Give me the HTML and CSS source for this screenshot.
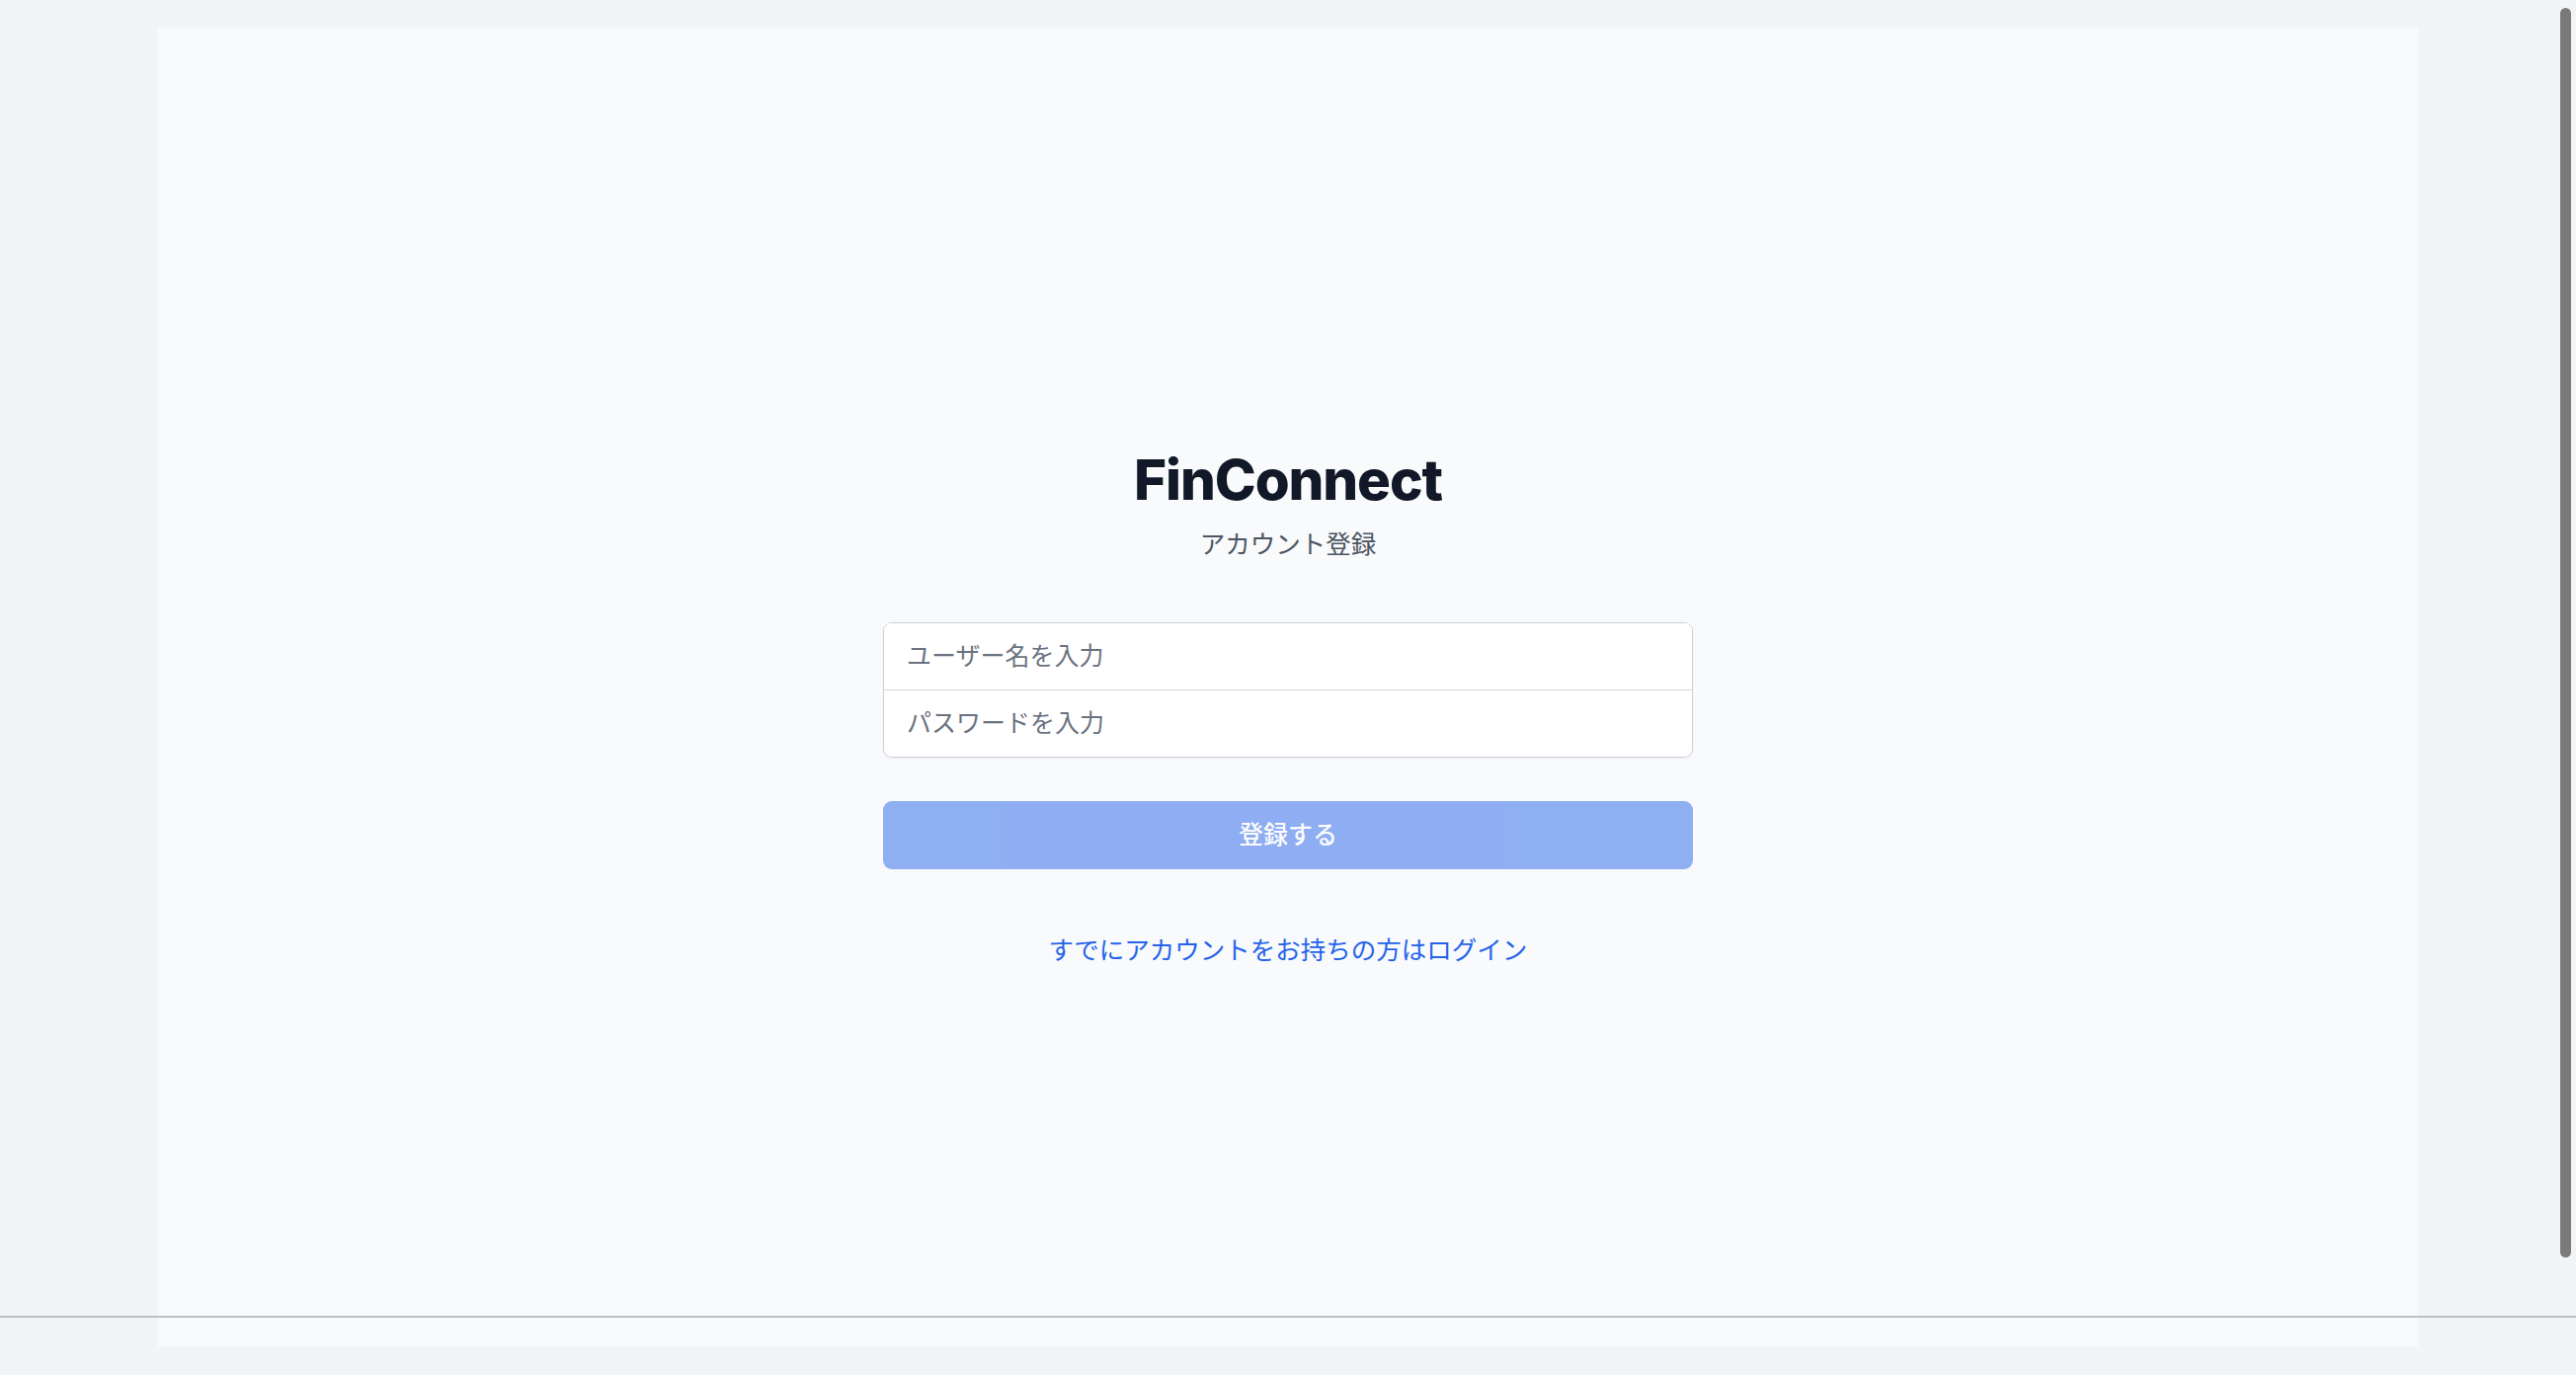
FILE: index.html
```html
<!DOCTYPE html>
<html lang="ja">
<head>
<meta charset="utf-8">
<title>FinConnect - アカウント登録</title>
<link rel="stylesheet" href="styles.css">
</head>
<body>
<div class="frame">
  <main class="panel">
    <h1 class="title">FinConnect</h1>
    <p class="subtitle">アカウント登録</p>
    <form class="form">
      <div class="field-group">
        <input class="field" type="text" placeholder="ユーザー名を入力">
        <input class="field field-last" type="password" placeholder="パスワードを入力">
      </div>
      <button class="submit" type="button">登録する</button>
    </form>
    <a class="login-link" href="#">すでにアカウントをお持ちの方はログイン</a>
  </main>
</div>
<div class="bottom-rule"></div>
<div class="scrollbar"></div>
</body>
</html>
```

FILE: styles.css
```css
* { box-sizing: border-box; }

html, body {
  margin: 0;
  padding: 0;
  height: 100%;
  overflow: hidden;
}

body {
  background: #f3f4f6;
  font-family: "Noto Sans CJK JP", "Noto Sans", sans-serif;
}

.frame {
  padding: 29px 160px;
  height: 1392px;
}

.panel {
  background: #f9fafb;
  height: 1334px;
  display: flex;
  flex-direction: column;
  align-items: center;
  padding-top: 422px;
}

.title {
  margin: 0;
  font-family: "Inter", "Liberation Sans", sans-serif;
  font-weight: 800;
  font-size: 56.5px;
  line-height: 69px;
  color: #111827;
  letter-spacing: -1.1px;
}

.subtitle {
  margin: 10px 0 0;
  font-size: 25.5px;
  line-height: 38px;
  color: #4b5563;
}

.form {
  margin-top: 62px;
  width: 820px;
  display: flex;
  flex-direction: column;
  gap: 44px;
}

.field-group {
  border: 1px solid #ccd0d6;
  border-radius: 9px;
  background: #ffffff;
  overflow: hidden;
  display: flex;
  flex-direction: column;
  box-shadow: 0 1px 2px rgba(0, 0, 0, 0.05);
}

.field {
  display: block;
  width: 100%;
  height: 68px;
  border: 0;
  border-bottom: 1px solid #d1d5db;
  padding: 0 23px 5px;
  font-family: "Noto Sans CJK JP", "Noto Sans", sans-serif;
  font-size: 25px;
  color: #111827;
  background: #ffffff;
  outline: none;
}

.field-last {
  border-bottom: 0;
  height: 67px;
}

.field::placeholder {
  color: #6b7280;
}

.submit {
  height: 69px;
  border: 0;
  border-radius: 9px;
  background: #2563eb;
  opacity: 0.5;
  color: #ffffff;
  font-family: "Noto Sans CJK JP", "Noto Sans", sans-serif;
  font-size: 25px;
  font-weight: 500;
  padding: 0 0 5px;
}

.login-link {
  margin-top: 61px;
  font-size: 25.5px;
  line-height: 38px;
  color: #2563eb;
  text-decoration: none;
}

.bottom-rule {
  position: fixed;
  left: 0;
  right: 0;
  top: 1332px;
  height: 2px;
  background: #bfc0c4;
}

.scrollbar {
  position: fixed;
  right: 5px;
  top: 8px;
  width: 11px;
  height: 1265px;
  border-radius: 6px;
  background: #7a7a7a;
}
```
